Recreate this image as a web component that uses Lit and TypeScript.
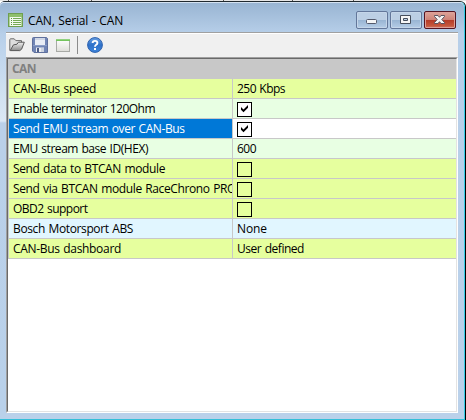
import { LitElement, html, svg, css } from "lit";
import { customElement } from "lit/decorators.js";
import { classMap } from "lit/directives/class-map.js";

interface Row { label: string; value: string | boolean; tone: string; selected?: boolean }

const ROWS: Row[] = [
  { label: "CAN-Bus speed", value: "250 Kbps", tone: "lime" },
  { label: "Enable terminator 120Ohm", value: true, tone: "mint" },
  { label: "Send EMU stream over CAN-Bus", value: true, tone: "white", selected: true },
  { label: "EMU stream base ID(HEX)", value: "600", tone: "mint" },
  { label: "Send data to BTCAN module", value: false, tone: "lime" },
  { label: "Send via BTCAN module RaceChrono PRO", value: false, tone: "lime" },
  { label: "OBD2 support", value: false, tone: "lime" },
  { label: "Bosch Motorsport ABS", value: "None", tone: "sky" },
  { label: "CAN-Bus dashboard", value: "User defined", tone: "lime" },
];

const listIcon = html`<svg width="16" height="15" viewBox="0 0 16 15" shape-rendering="crispEdges">
  <rect x=".5" y=".5" width="14" height="13" fill="#f4faee" stroke="#6f9f50"/>
  <rect x="1" y="1" width="13" height="3" fill="#8fbf6c"/>
  <rect x="1" y="4" width="1" height="9" fill="#b5d49e"/><rect x="13" y="4" width="1" height="9" fill="#b5d49e"/>
  ${[5, 7, 9, 11].map(y => svg`<rect x="3" y=${y} width="1" height="1" fill="#5f9440"/><rect x="5" y=${y} width="8" height="1" fill="#76a956"/>`)}
</svg>`;

const folderIcon = html`<svg width="16" height="16" viewBox="0 0 16 16">
  <defs><linearGradient id="f" x2="0" y2="1"><stop stop-color="#f2f2f2"/><stop offset="1" stop-color="#8c8c8c"/></linearGradient></defs>
  <path d="M.8 13.5V2.6Q.8 1.8 1.6 1.8H5.2L6.8 3.6H12.5V6" fill="#dedede" stroke="#6c6c6c"/>
  <path d="M1.2 13.6L4.4 7.9L8 7.2L9.4 5.2H15.3L12.6 12.2L10.8 13.6Z" fill="url(#f)" stroke="#595959" stroke-linejoin="round"/>
</svg>`;

const saveIcon = html`<svg width="16" height="16" viewBox="0 0 16 16">
  <path d="M.5 1.5Q.5.5 1.5.5H14.5L15.5 1.5V15.5H2L.5 14Z" fill="#7185b5" stroke="#5f709d"/>
  <path d="M3 1H13V8H3Z" fill="#e9edf5"/><path d="M3 1H13V3H3Z" fill="#cfd7e7"/>
  <path d="M1 8.5H15" stroke="#8b9dc6"/>
  <path d="M4 10.5H12V15H4Z" fill="#eceef2"/><path d="M5 11H7V15H5Z" fill="#4d5c85"/><path d="M9 11H12V15H9Z" fill="#cdd3df"/>
</svg>`;

const windowIcon = html`<svg width="15" height="13" viewBox="0 0 15 13" shape-rendering="crispEdges">
  <defs><linearGradient id="w" x2="0" y2="1"><stop stop-color="#fff"/><stop offset="1" stop-color="#deded9"/></linearGradient></defs>
  <rect x=".5" y=".5" width="13" height="12" fill="url(#w)" stroke="#a8aaa6"/>
  <rect x="0" y="0" width="14" height="1" fill="#91d27f"/><rect x="0" y="1" width="14" height="1" fill="#74c45d"/>
</svg>`;

const helpIcon = html`<svg width="16" height="16" viewBox="0 0 16 16">
  <defs><linearGradient id="h" x2="0" y2="1"><stop stop-color="#6aa1e4"/><stop offset=".5" stop-color="#2e71c9"/><stop offset="1" stop-color="#3f86dc"/></linearGradient></defs>
  <circle cx="8" cy="8" r="7.4" fill="url(#h)" stroke="#2f62ae"/>
  <path d="M5.6 6Q5.7 3.9 8 3.9Q10.4 3.9 10.4 5.9Q10.4 7 9.2 7.8Q8 8.6 8 9.8" fill="none" stroke="#fff" stroke-width="1.9"/>
  <rect x="7" y="11" width="2" height="2" fill="#fff"/>
</svg>`;

const glyphs: Record<string, unknown> = {
  min: html`<svg width="32" height="18" viewBox="0 0 32 18"><rect x="10.5" y="8.5" width="10" height="4" rx="1" fill="#f4f5f6" stroke="#53596b"/></svg>`,
  max: html`<svg width="32" height="18" viewBox="0 0 32 18"><path fill-rule="evenodd" d="M10.5 4.5H20.5V12.5H10.5ZM13.5 7.5V9.5H17.5V7.5Z" fill="#f6f6f6" stroke="#464e5c"/></svg>`,
  close: html`<svg width="32" height="18" viewBox="0 0 32 18"><path d="M10.5 4.5H14L15.5 6.3L17 4.5H20.5V5.5L17.8 8.5L20.5 11.5V12.5H17L15.5 10.7L14 12.5H10.5V11.5L13.2 8.5L10.5 5.5Z" fill="#f6f4f4" stroke="#59545f" stroke-linejoin="round"/></svg>`,
};

@customElement("app-root")
export class AppRoot extends LitElement {
  static styles = css`
    :host { display: block; width: 466px; height: 420px; overflow: hidden; background: #fff;
      font: 12px/19px "Open Sans", "Noto Sans", sans-serif; color: #000; }
    * { box-sizing: border-box; }
    svg { display: block; }
    .backdrop { height: 1px; background: #e6e6e6; display: grid; grid-template-columns: 9px 83px 132px 69px 61px 1fr; }
    .backdrop i { border-right: 1px solid #555; }
    .window { height: 419px; display: flex; flex-direction: column; border-top: 1px solid #20292f;
      border-right: 1px solid #000; border-radius: 5px 6px 0 0; }
    .frame { flex: 1; min-height: 0; display: flex; flex-direction: column; padding: 0 6px 6px;
      border-right: 1px solid #35cde5; border-bottom: 1px solid #35bfd8; border-radius: 4px 5px 0 0;
      box-shadow: inset 0 1px #d4e2f1;
      background: linear-gradient(#98b4d2, #b7cfe9 32px, #c3d8ee 60px, #dce8f5 119px, #bad0e9 121px, #b9d1ea) 0 0 / 6px 100% no-repeat,
        linear-gradient(#98b4d2, #b7cfe9 32px, #bad1ea); }
    .title { height: 30px; flex: none; display: flex; align-items: flex-start; padding: 9px 2px 0; }
    .title .icon { margin-top: 2px; }
    .title .name { flex: 1; padding-left: 4px; white-space: pre; }
    .buttons { display: flex; gap: 2px; }
    .btn { width: 32px; height: 18px; border: 1px solid #63779a; border-radius: 2px; display: flex;
      align-items: center; justify-content: center; box-shadow: inset 0 0 0 1px #c5d6e9;
      background: linear-gradient(#bccfe4 0 8px, #98b4d2 8px, #b5cde7); }
    .btn.close { border-color: #551421; box-shadow: inset 0 0 0 1px #dd9f98;
      background: linear-gradient(#dda49a, #ce8176 8px, #b43a26 8px, #c6583e 14px, #d58069); }
    .btn svg { flex: none; }
    .client { flex: 1; min-height: 0; display: flex; flex-direction: column; border-top: 1px solid #a0a0a0; background: #f0f0f0; }
    .toolbar { height: 24px; flex: none; display: flex; align-items: center; padding: 0 0 1px 3px; border-top: 1px solid #fff; }
    .toolbar .save { margin-left: 7px; }
    .toolbar .win { margin-left: 8px; }
    .toolbar .sep { width: 1px; height: 18px; background: #8c8c8c; margin-left: 6px; }
    .toolbar .help { margin-left: 9px; }
    .grid { flex: 1; min-height: 0; background: #fff; border: 1px solid; border-color: #a0a0a0 #fff #fff #a0a0a0; }
    .inner { height: 100%; border: 1px solid; border-color: #696969 #e3e3e3 #e3e3e3 #696969; }
    .head { height: 20px; background: #c8c8c8; color: #808080; font-weight: 700; padding-left: 4px; }
    .row { height: 20px; display: flex; border-bottom: 1px solid #c8c8c8; border-left: 1px solid #c8c8c8; }
    .label { width: 224px; flex: none; padding-left: 4px; border-right: 1px solid #c8c8c8; overflow: hidden; white-space: pre; }
    .value { flex: 1; padding-left: 4px; white-space: pre; }
    .lime { background: #e6ff9e; }
    .mint { background: #e8ffe3; }
    .white { background: #fff; }
    .sky { background: #e1f6ff; }
    .selected { background: #0078d7; color: #fff; }
    .fit { display: inline-block; word-spacing: 0.8px; }
    .check { width: 15px; height: 15px; border: 1px solid #000; margin-top: 3px; }
    .check.on { background: #fff; }
  `;

  private static readonly widths: Record<string, number> = {
    "CAN, Serial - CAN": 95, "CAN": 24,
    "CAN-Bus speed": 83, "Enable terminator 120Ohm": 142, "Send EMU stream over CAN-Bus": 171.5,
    "EMU stream base ID(HEX)": 135, "Send data to BTCAN module": 152,
    "Send via BTCAN module RaceChrono PRO": 223, "OBD2 support": 74.5,
    "Bosch Motorsport ABS": 120, "CAN-Bus dashboard": 108,
    "250 Kbps": 48, "600": 19, "None": 30, "User defined": 67,
  };

  /* Tracks each caption so that it takes its intended width. */
  protected firstUpdated() {
    this.renderRoot.querySelectorAll<HTMLElement>(".fit").forEach(el => {
      const text = el.textContent ?? "";
      const target = AppRoot.widths[text];
      if (target) el.style.letterSpacing = `${(target - el.getBoundingClientRect().width) / text.length}px`;
    });
  }

  private text(s: string) { return html`<span class="fit">${s}</span>`; }

  private check(on: boolean) {
    return html`<div class=${classMap({ check: true, on })}>${on
      ? html`<svg width="13" height="13" viewBox="0 0 13 13"><path d="M3 4L5.5 6.5L10 2V4.7L5.5 9.2L3 6.7Z"/></svg>` : ""}</div>`;
  }

  render() {
    return html`
      <div class="backdrop"><i></i><i></i><i></i><i></i><i></i></div>
      <div class="window"><div class="frame">
        <div class="title">
          <span class="icon">${listIcon}</span>
          <span class="name">${this.text("CAN, Serial - CAN")}</span>
          <div class="buttons">${["min", "max", "close"].map(k => html`<div class="btn ${k}">${glyphs[k]}</div>`)}</div>
        </div>
        <div class="client">
          <div class="toolbar">
            <span>${folderIcon}</span><span class="save">${saveIcon}</span><span class="win">${windowIcon}</span>
            <span class="sep"></span><span class="help">${helpIcon}</span>
          </div>
          <div class="grid"><div class="inner">
            <div class="head">${this.text("CAN")}</div>
            ${ROWS.map(r => html`<div class="row ${r.tone}">
              <div class=${classMap({ label: true, selected: !!r.selected })}>${this.text(r.label)}</div>
              <div class="value">${typeof r.value === "boolean" ? this.check(r.value) : this.text(r.value)}</div>
            </div>`)}
          </div></div>
        </div>
      </div></div>`;
  }
}
